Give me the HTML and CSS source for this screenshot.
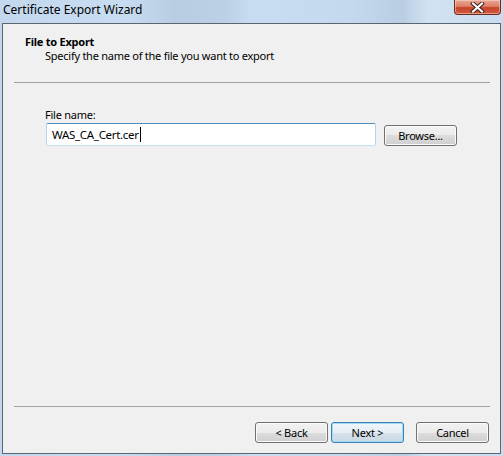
FILE: index.html
```html
<!DOCTYPE html>
<html>
<head>
<meta charset="utf-8">
<title>Certificate Export Wizard</title>
<link rel="stylesheet" href="styles.css">
</head>
<body>
<div class="window">
  <div class="titlebar">
    <span class="title">Certificate Export Wizard</span>
    <div class="close">
      <svg width="15" height="11" viewBox="0 0 15 11">
        <path d="M3 1.5 L12 9.5 M12 1.5 L3 9.5" stroke="#3a1a14" stroke-width="4" stroke-linecap="square" fill="none"/>
        <path d="M3 1.5 L12 9.5 M12 1.5 L3 9.5" stroke="#ffffff" stroke-width="2.2" stroke-linecap="square" fill="none"/>
      </svg>
    </div>
  </div>
  <div class="client">
    <div class="header">
      <div class="heading">File to Export</div>
      <div class="subheading">Specify the name of the file you want to export</div>
    </div>
    <div class="separator top-sep"></div>
    <div class="form">
      <div class="label">File name:</div>
      <div class="field-row">
        <div class="textbox"><span class="value">WAS_CA_Cert.cer</span><span class="caret"></span></div>
        <div class="button browse">Browse...</div>
      </div>
    </div>
    <div class="spacer"></div>
    <div class="footer">
      <div class="separator"></div>
      <div class="buttons">
        <div class="button">&lt; Back</div>
        <div class="button default">Next &gt;</div>
        <div class="button cancel">Cancel</div>
      </div>
    </div>
  </div>
</div>
</body>
</html>
```
FILE: styles.css
```css
html, body {
  margin: 0;
  padding: 0;
}
body {
  width: 503px;
  height: 456px;
  overflow: hidden;
  font-family: "Noto Sans", "DejaVu Sans", sans-serif;
  font-size: 11px;
  letter-spacing: -0.25px;
  color: #000;
}
.window {
  width: 503px;
  height: 456px;
  display: flex;
  flex-direction: column;
  background: linear-gradient(90deg, #c3d8ee 0%, #c8dcf1 25%, #b8cce2 35%, #bcd0e6 45%, #c9ddf2 50%, #c4d8ee 70%, #b9cde3 80%, #d2e2f2 85%, #c9dcf0 100%);
}
.titlebar {
  height: 23px;
  display: flex;
  justify-content: space-between;
  align-items: flex-start;
}
.title {
  padding-left: 3px;
  padding-top: 1px;
  font-size: 12px;
  letter-spacing: 0;
  line-height: 17px;
  color: #000;
}
.close {
  width: 45px;
  height: 14px;
  margin-right: 2px;
  border: 1px solid #6b2a1e;
  border-top: none;
  border-radius: 0 0 4px 4px;
  background: linear-gradient(180deg, #e9a795 0%, #dd8066 45%, #c5432a 55%, #d15d3e 100%);
  box-shadow: inset 0 0 0 1px rgba(255, 220, 210, 0.5);
  display: flex;
  justify-content: center;
  align-items: center;
}
.client {
  flex: 1;
  margin: 0 2px 2px 2px;
  border: 1px solid #5b6673;
  background: #f0f0f0;
  display: flex;
  flex-direction: column;
}
.header {
  padding-top: 11px;
  line-height: 14px;
}
.heading {
  padding-left: 22px;
  font-weight: bold;
}
.subheading {
  padding-left: 42px;
}
.separator {
  height: 1px;
  background: #a0a0a0;
  margin: 0 10px 0 11px;
}
.top-sep {
  margin-top: 19px;
}
.form {
  padding-top: 25px;
  padding-left: 42px;
}
.label {
  line-height: 14px;
}
.field-row {
  display: flex;
  align-items: flex-start;
  margin-top: 1px;
}
.textbox {
  width: 323px;
  height: 21px;
  margin-left: 1px;
  border: 1px solid;
  border-color: #4f8fbd #b3d3ea #c6e0f1 #b3d3ea;
  border-radius: 2px;
  background: #fff;
  display: flex;
  align-items: center;
  padding-left: 5px;
  font-size: 11.5px;
  letter-spacing: -0.3px;
}
.caret {
  width: 1px;
  height: 15px;
  background: #000;
  margin-left: 1px;
}
.button {
  box-sizing: border-box;
  width: 73px;
  height: 21px;
  border: 1px solid #707070;
  border-radius: 3px;
  background: linear-gradient(180deg, #f2f2f2 0%, #ebebeb 50%, #dddddd 50%, #cfcfcf 100%);
  box-shadow: inset 0 0 0 1px #fbfbfb;
  display: flex;
  justify-content: center;
  align-items: center;
  font-size: 11px;
}
.browse {
  margin-left: 8px;
  margin-top: 2px;
}
.spacer {
  flex: 1;
}
.buttons {
  display: flex;
  justify-content: flex-end;
  gap: 3px;
  margin-top: 15px;
  padding-right: 11px;
  padding-bottom: 10px;
}
.default {
  border-color: #3c7fb1;
  box-shadow: inset 0 0 0 1px #9fdcf5;
  background: linear-gradient(180deg, #f0f6fa 0%, #e6eef4 50%, #d6e2ec 50%, #c9d8e4 100%);
}
.cancel {
  margin-left: 9px;
}
```
